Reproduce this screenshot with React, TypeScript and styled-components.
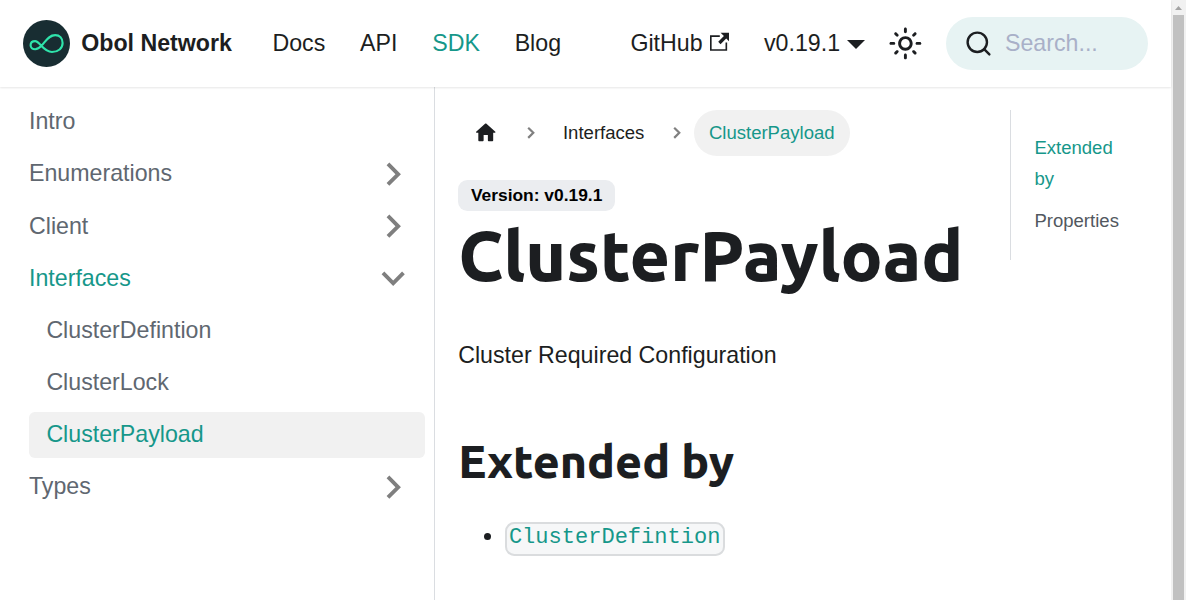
import React from "react";
import styled, { createGlobalStyle, css } from "styled-components";

const teal = "#16978a";
const ink = "#1c1e21";

const GlobalStyle = createGlobalStyle`
  *, *::before, *::after { box-sizing: border-box; }
  body {
    margin: 0;
    background: #fff;
    color: ${ink};
    font-family: "Liberation Sans", Arial, sans-serif;
    font-size: 23.2px;
    line-height: 1.65;
    overflow: hidden;
  }
  a { color: inherit; text-decoration: none; }
`;

const Window = styled.div`
  display: flex;
  height: 600px;
  overflow: hidden;
`;

const Page = styled.div`
  flex: 1;
  min-width: 0;
  display: flex;
  flex-direction: column;
`;

const Navbar = styled.nav`
  position: relative;
  z-index: 1;
  flex: none;
  display: flex;
  align-items: center;
  justify-content: space-between;
  height: 87px;
  padding: 0 23px;
  background: #fff;
  box-shadow: 0 1px 2px 0 rgba(0, 0, 0, 0.1);
`;

const NavGroup = styled.div`
  display: flex;
  align-items: center;
`;

const Brand = styled.a`
  display: flex;
  align-items: center;
  gap: 11.2px;
  margin-right: 23.1px;
  font-weight: 700;
`;

const NavLink = styled.a<{ $active?: boolean }>`
  display: flex;
  align-items: center;
  padding: 0 17.4px;
  white-space: nowrap;
  color: ${(p) => (p.$active ? teal : ink)};
`;

const ExternalLink = styled(NavLink)`
  gap: 7px;
  svg { margin-top: -3px; }
`;

const DropdownCaret = styled.span`
  margin: 2.5px 0 0 7px;
  border: 9.28px solid transparent;
  border-top-color: currentColor;
  border-bottom: 0;
`;

const ThemeToggle = styled.button`
  display: flex;
  align-items: center;
  justify-content: center;
  width: 46.4px;
  height: 46.4px;
  padding: 0;
  border: 0;
  background: none;
  color: ${ink};
`;

const SearchBox = styled.div`
  display: flex;
  align-items: center;
  gap: 12px;
  width: 202px;
  height: 53px;
  margin-left: 17.2px;
  padding-left: 18px;
  border-radius: 27px;
  background: #e7f3f3;
  color: #a9b0c8;
`;

const Columns = styled.div`
  flex: 1;
  min-height: 0;
  display: flex;
`;

const Sidebar = styled.aside`
  flex: none;
  width: 435px;
  padding: 11.6px 9.3px 0 11.6px;
  border-right: 1px solid #dadde1;
`;

const Menu = styled.ul`
  display: flex;
  flex-direction: column;
  gap: 5.8px;
  margin: 0;
  padding: 0;
  list-style: none;
`;

const MenuItem = styled.li<{ $nested?: boolean; $active?: boolean; $current?: boolean }>`
  display: flex;
  align-items: center;
  justify-content: space-between;
  height: 46.4px;
  padding: 0 8.4px 1px 17.4px;
  border-radius: 5.8px;
  color: ${(p) => (p.$active ? teal : "#606770")};
  ${(p) => p.$nested && css`margin-left: 17.4px;`}
  ${(p) => p.$current && css`background: #f1f1f1;`}
`;

const Caret = styled.svg<{ $open?: boolean }>`
  width: 46.4px;
  height: 46.4px;
  margin-top: 0.6px;
  fill: rgba(0, 0, 0, 0.5);
  transform: rotate(${(p) => (p.$open ? 180 : 90)}deg);
`;

const Content = styled.main`
  flex: 1;
  min-width: 0;
  display: flex;
  padding: 23.2px 23.2px 0;
`;

const Article = styled.article`
  width: 552px;
  flex: none;
`;

const Breadcrumbs = styled.div`
  display: flex;
  align-items: center;
  height: 46px;
  margin-bottom: 24px;
  font-size: 18.56px;
`;

const Crumb = styled.a<{ $current?: boolean }>`
  display: flex;
  align-items: center;
  height: 46px;
  padding: 0 14.9px 0 14.8px;
  border-radius: 23px;
  ${(p) => p.$current && css`background: #f1f1f1; color: ${teal};`}
`;

const Separator = styled.svg`
  width: 11.6px;
  height: 11.6px;
  margin: 0 11.6px;
  fill: none;
  stroke: #808080;
  stroke-width: 2.2;
  overflow: visible;
`;

const Badge = styled.span`
  display: flex;
  align-items: center;
  width: 157px;
  height: 31px;
  padding-left: 12.7px;
  border-radius: 9.3px;
  background: #ebedf0;
  color: #000;
  font-size: 17.4px;
  font-weight: 700;
  white-space: nowrap;
`;

const Title = styled.h1`
  margin: 0;
  height: 89px;
  font: 800 69.6px/88px Ubuntu, "Noto Sans", sans-serif;
  white-space: nowrap;
`;

const Lead = styled.p`
  height: 38px;
  margin: 36px 0 0;
  line-height: 38px;
`;

const Heading = styled.h2`
  height: 58px;
  margin: 58px 0 0;
  font: 800 46.4px/58px Ubuntu, "Noto Sans", sans-serif;
  white-space: nowrap;
`;

const List = styled.ul`
  margin: 27px 0 0;
  padding-left: 46.4px;
  line-height: 38.3px;
`;

const Code = styled.code`
  padding: 1.3px 2.3px 3.3px;
  border: 2px solid #dadcde;
  border-radius: 9.3px;
  background: #f6f7f8;
  color: ${teal};
  font: 22.04px "Liberation Mono", monospace;
  vertical-align: middle;
`;

const Toc = styled.ul`
  width: 138px;
  height: 150px;
  margin: 0;
  padding: 23px 0 0 23.2px;
  border-left: 1px solid #dadde1;
  list-style: none;
  font-size: 18.56px;
  line-height: 30.6px;
`;

const TocItem = styled.li<{ $active?: boolean }>`
  width: 90px;
  margin-bottom: 11.6px;
  color: ${(p) => (p.$active ? teal : "#525860")};
`;

const Scrollbar = styled.div`
  flex: none;
  display: flex;
  flex-direction: column;
  align-items: center;
  width: 15px;
  background: #f1f1f1;
`;

const ScrollUp = styled.svg`
  flex: none;
  width: 15px;
  height: 15px;
  fill: #a3a3a3;
`;

const Thumb = styled.div`
  flex: 1;
  width: 11px;
  background: #c1c1c1;
`;

const Logo = () => (
  <svg width="47" height="47" viewBox="0 0 46.4 46.4">
    <circle cx="23.2" cy="23.2" r="23.2" fill="#182d32" />
    <path
      d="M18.4 25.2 C15.9 28 14.2 28.9 12 28.9 C9.3 28.9 7.5 27.3 7.5 24.9 C7.5 22.5 9.3 20.9 12 20.9 C16.5 20.9 20 31.6 28.6 31.6 C34.8 31.6 39.1 28 39.1 22.7 C39.1 18 36.1 14.9 31.8 14.9 C25.2 14.9 22.5 21 18.4 25.2 Z"
      fill="none"
      stroke="#2fe4ab"
      strokeWidth="2.1"
    />
  </svg>
);

const External = () => (
  <svg width="19.6" height="19.6" viewBox="0 0 24 24" fill="currentColor">
    <path d="M21 13v10h-21v-19h12v2h-10v15h17v-8h2zm3-12h-10.988l4.035 4-6.977 7.070 2.828 2.828 6.977-7.070 4.125 4.172v-11z" />
  </svg>
);

const Sun = () => (
  <svg width="34.8" height="34.8" viewBox="0 0 24 24" fill="currentColor">
    <path d="M12,9c1.65,0,3,1.35,3,3s-1.35,3-3,3s-3-1.35-3-3S10.350,9,12,9 M12,7c-2.760,0-5,2.240-5,5s2.240,5,5,5s5-2.240,5-5 S14.760,7,12,7L12,7z M2,13l2,0c0.550,0,1-0.450,1-1s-0.450-1-1-1l-2,0c-0.550,0-1,0.450-1,1S1.450,13,2,13z M20,13l2,0c0.550,0,1-0.450,1-1 s-0.450-1-1-1l-2,0c-0.550,0-1,0.450-1,1S19.450,13,20,13z M11,2v2c0,0.550,0.450,1,1,1s1-0.450,1-1V2c0-0.550-0.450-1-1-1S11,1.450,11,2z M11,20v2c0,0.550,0.450,1,1,1s1-0.450,1-1v-2c0-0.550-0.450-1-1-1C11.450,19,11,19.450,11,20z M5.990,4.580c-0.390-0.390-1.030-0.390-1.410,0 c-0.390,0.390-0.390,1.030,0,1.410l1.060,1.060c0.390,0.390,1.030,0.390,1.410,0s0.390-1.030,0-1.410L5.990,4.580z M18.360,16.950 c-0.390-0.390-1.030-0.390-1.410,0c-0.390,0.390-0.390,1.030,0,1.410l1.060,1.060c0.390,0.390,1.030,0.390,1.410,0c0.390-0.390,0.390-1.030,0-1.410 L18.360,16.950z M19.420,5.990c0.390-0.390,0.390-1.030,0-1.410c-0.390-0.390-1.030-0.390-1.410,0l-1.060,1.060c-0.390,0.390-0.390,1.030,0,1.410 s1.030,0.390,1.410,0L19.420,5.990z M7.050,18.360c0.390-0.390,0.390-1.030,0-1.410c-0.390-0.390-1.030-0.390-1.410,0l-1.060,1.060 c-0.390,0.390-0.390,1.030,0,1.410s1.030,0.390,1.410,0L7.050,18.360z" />
  </svg>
);

const SearchIcon = () => (
  <svg width="29" height="29" viewBox="0 0 24 24" fill="none" stroke={ink} strokeWidth="2" strokeLinecap="round">
    <circle cx="11" cy="11" r="8" />
    <path d="M21 21l-4.350-4.350" />
  </svg>
);

const Home = () => (
  <svg width="25.5" height="25.5" viewBox="0 0 24 24" fill="currentColor">
    <path d="M10 19v-5h4v5c0 .55.45 1 1 1h3c.55 0 1-.45 1-1v-7h1.700c.46 0 .68-.57.33-.87L12.670 3.600c-.38-.34-.96-.34-1.340 0l-8.360 7.530c-.34.3-.13.87.33.87H5v7c0 .55.45 1 1 1h3c.55 0 1-.45 1-1z" />
  </svg>
);

const CrumbSeparator = () => (
  <Separator viewBox="0 0 11.6 11.6">
    <path d="M3.200 0.700L8.300 5.800L3.200 10.900" />
  </Separator>
);

type Entry = { label: string; nested?: boolean; active?: boolean; current?: boolean; caret?: "open" | "closed" };

const entries: Entry[] = [
  { label: "Intro" },
  { label: "Enumerations", caret: "closed" },
  { label: "Client", caret: "closed" },
  { label: "Interfaces", active: true, caret: "open" },
  { label: "ClusterDefintion", nested: true },
  { label: "ClusterLock", nested: true },
  { label: "ClusterPayload", nested: true, active: true, current: true },
  { label: "Types", caret: "closed" },
];

export default function App() {
  return (
    <Window>
      <GlobalStyle />
      <Page>
        <Navbar>
          <NavGroup>
            <Brand href="#"><Logo />Obol Network</Brand>
            <NavLink href="#">Docs</NavLink>
            <NavLink href="#">API</NavLink>
            <NavLink href="#" $active>SDK</NavLink>
            <NavLink href="#">Blog</NavLink>
          </NavGroup>
          <NavGroup>
            <ExternalLink href="#">GitHub<External /></ExternalLink>
            <NavLink href="#">v0.19.1<DropdownCaret /></NavLink>
            <ThemeToggle aria-label="Toggle theme"><Sun /></ThemeToggle>
            <SearchBox><SearchIcon />Search...</SearchBox>
          </NavGroup>
        </Navbar>
        <Columns>
          <Sidebar>
            <Menu>
              {entries.map((e) => (
                <MenuItem key={e.label} $nested={e.nested} $active={e.active} $current={e.current}>
                  {e.label}
                  {e.caret && (
                    <Caret viewBox="0 0 24 24" $open={e.caret === "open"}>
                      <path d="M7.410 15.410L12 10.830l4.590 4.580L18 14l-6-6-6 6z" />
                    </Caret>
                  )}
                </MenuItem>
              ))}
            </Menu>
          </Sidebar>
          <Content>
            <Article>
              <Breadcrumbs>
                <Crumb href="#" aria-label="Home"><Home /></Crumb>
                <CrumbSeparator />
                <Crumb href="#">Interfaces</Crumb>
                <CrumbSeparator />
                <Crumb href="#" $current>ClusterPayload</Crumb>
              </Breadcrumbs>
              <Badge>Version: v0.19.1</Badge>
              <Title>ClusterPayload</Title>
              <Lead>Cluster Required Configuration</Lead>
              <Heading>Extended by</Heading>
              <List>
                <li><Code>ClusterDefintion</Code></li>
              </List>
            </Article>
            <Toc>
              <TocItem $active>Extended by</TocItem>
              <TocItem>Properties</TocItem>
            </Toc>
          </Content>
        </Columns>
      </Page>
      <Scrollbar>
        <ScrollUp viewBox="0 0 15 15"><path d="M4 10h7L7.500 6z" /></ScrollUp>
        <Thumb />
      </Scrollbar>
    </Window>
  );
}
